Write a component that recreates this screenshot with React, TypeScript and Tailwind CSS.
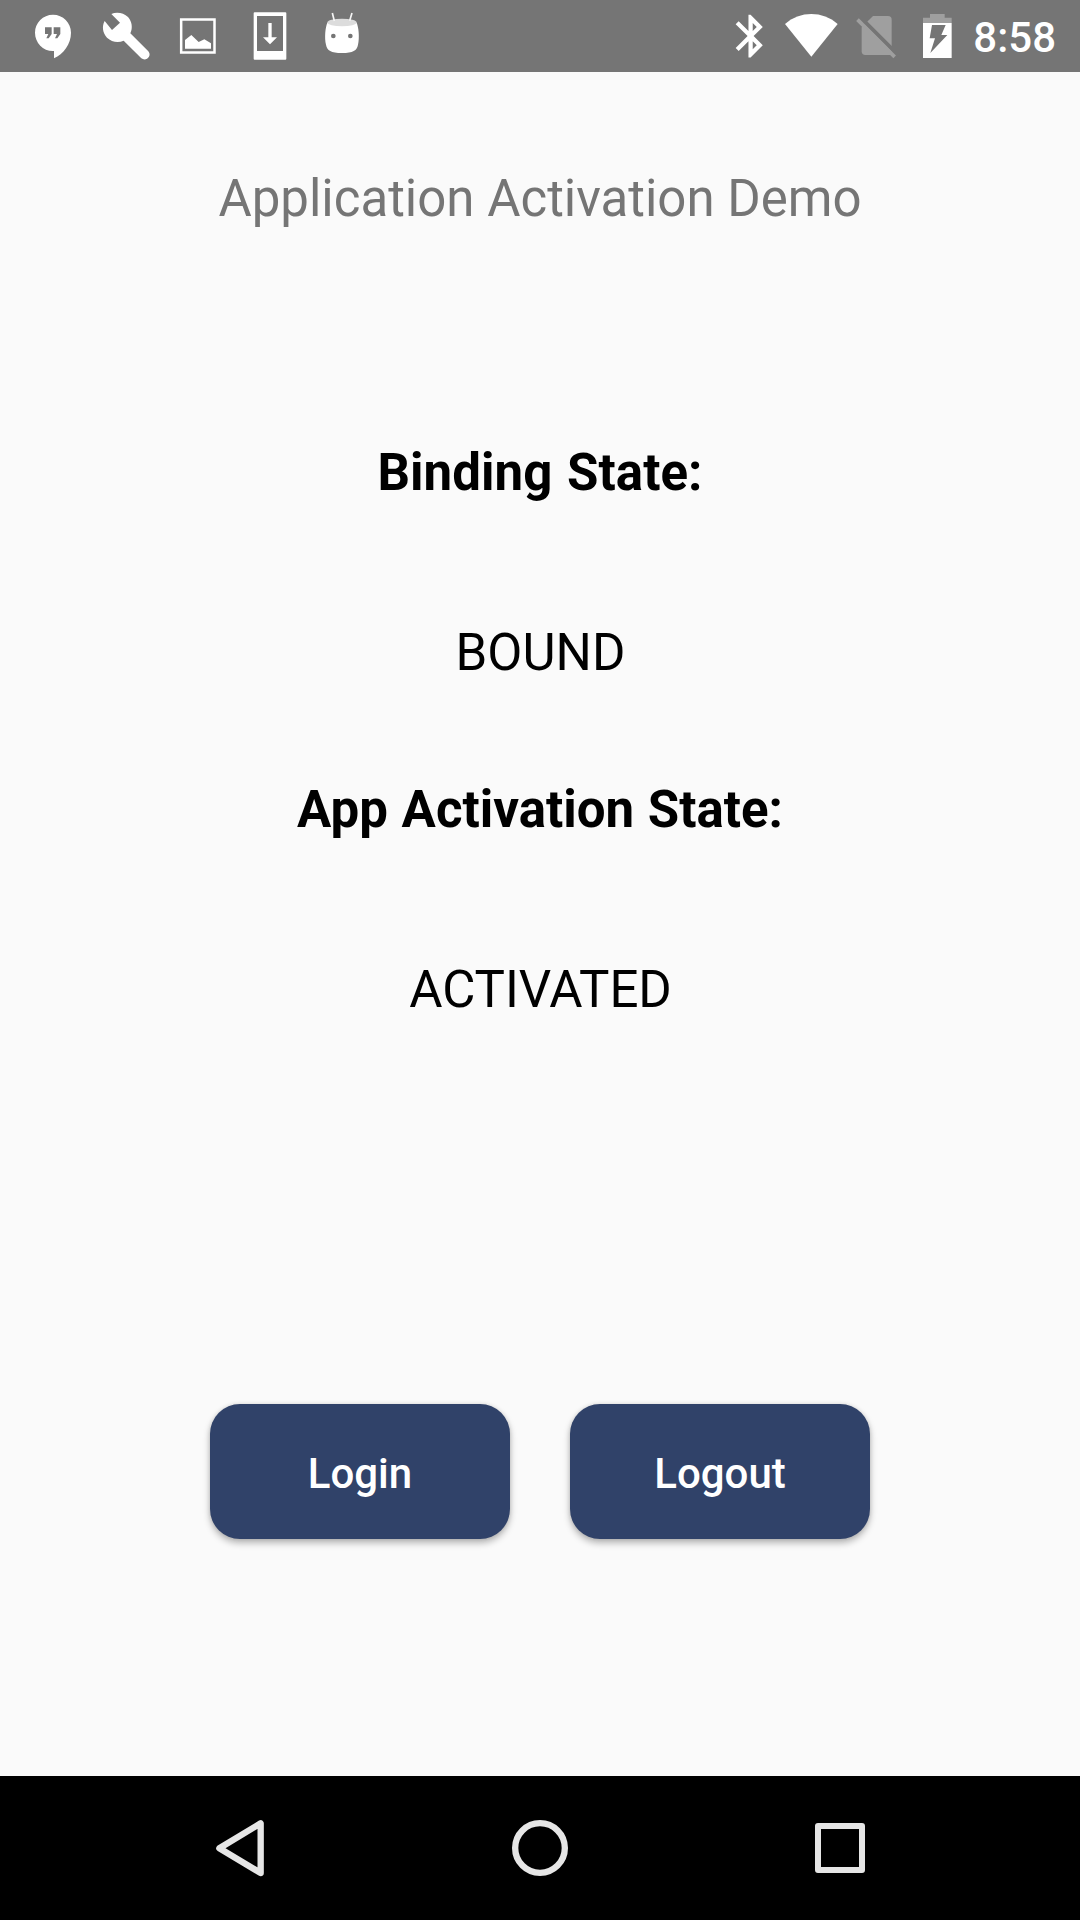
import type { ReactNode } from "react";

function StatusIcon({ viewBox, className, children }: { viewBox: string; className: string; children: ReactNode }) {
  return (
    <svg viewBox={viewBox} className={className} fill="#fff" aria-hidden="true">
      {children}
    </svg>
  );
}

function Notifications() {
  return (
    <div className="flex pl-[17px]">
      <StatusIcon viewBox="51 0 216 216" className="size-[72px]">
        <path d="M159 44C189 44 213 68 213 98C213 132 190 162 162 175V153H159C129 153 105 128 105 98S129 44 159 44Z" />
        <path fill="#757575" d="M135 82H155V102L146 115H139L145 102H135ZM161 82H181V102L172 115H165L171 102H161Z" />
      </StatusIcon>
      <StatusIcon viewBox="267 0 216 216" className="size-[72px]">
        <path d="M334 42C349 35 371 38 384 51C396 64 399 84 391 100L445 154C457 168 438 186 424 175L371 122C354 129 335 126 321 113C308 99 305 79 314 63L336 90L360 68Z" />
      </StatusIcon>
      <StatusIcon viewBox="-57 0 216 216" className="size-[72px]">
        <rect x="3.5" y="58.5" width="100" height="99" fill="none" stroke="#fff" strokeWidth="7.5" />
        <path d="M15 146V120L34 105L56 126L73 118L93 130V146Z" />
      </StatusIcon>
      <StatusIcon viewBox="159 0 216 216" className="size-[72px]">
        <path fillRule="evenodd" d="M224 37H316Q319 37 319 40V176Q319 179 316 179H224Q221 179 221 176V40Q221 37 224 37ZM231 48V153H309V48Z" />
        <path d="M265 69H275V112H291L270 133L249 112H265Z" />
      </StatusIcon>
      <StatusIcon viewBox="375 0 216 216" className="size-[72px]">
        <path d="M442 68H530C536 82 539 112 534 134C531 151 519 159 486 159S441 151 438 134C433 112 436 82 442 68Z" />
        <ellipse cx="486" cy="67.5" rx="44" ry="11.5" fill="#dcdcdc" />
        <path d="M457 39L463 63M516 39L509 62" stroke="#f5f5f5" strokeWidth="5" />
        <circle cx="460" cy="108" r="7" fill="#757575" />
        <circle cx="511" cy="108" r="7" fill="#757575" />
      </StatusIcon>
    </div>
  );
}

function SystemStatus() {
  return (
    <div className="flex w-[355px] items-center pr-[24px]">
      <StatusIcon viewBox="15 0 144 216" className="h-[72px] w-[48px]">
        <path
          transform="translate(15 31.5) scale(6.4)"
          d="M17.71 7.71L12 2h-1v7.59L6.41 5 5 6.41 10.59 12 5 17.59 6.41 19 11 14.41V22h1l5.71-5.71-4.3-4.29 4.3-4.29zM13 5.83l1.88 1.88L13 9.59V5.83zm1.88 10.46L13 18.17v-3.76l1.88 1.88z"
        />
      </StatusIcon>
      <StatusIcon viewBox="159 0 231 216" className="h-[72px] w-[77px]">
        <path d="M195 72C240 32 308 32 353 72L274 170Z" />
      </StatusIcon>
      <StatusIcon viewBox="390 0 159 216" className="h-[72px] w-[53px]">
        <path fill="#9f9f9f" d="M425 82L459 48H504Q515 48 515 59V165H436Q425 165 425 154Z" />
        <path stroke="#757575" strokeWidth="12" d="M413 44L536 167" />
        <path stroke="#9f9f9f" strokeWidth="11" d="M412.5 59L524 170.5" />
      </StatusIcon>
      <StatusIcon viewBox="69 0 162 216" className="h-[72px] w-[54px]">
        <path fill="#9f9f9f" d="M150 42H194V53H215V69H129V53H150Z" />
        <path d="M129 69H215V174H129Z" />
        <path fill="#757575" d="M156 75H197L184 105H202L151 159L165 115H149Z" />
      </StatusIcon>
      <span className="ml-auto pt-[2px] text-[42px] font-medium text-white">8:58</span>
    </div>
  );
}

function ActionButton({ children }: { children: ReactNode }) {
  return (
    <button className="h-[135px] w-[300px] rounded-[30px] bg-[#304269] pt-[5px] shadow-[0_4px_7px_rgba(0,0,0,0.28),0_0_4px_rgba(0,0,0,0.1)]">
      {children}
    </button>
  );
}

function NavIcon({ children }: { children: ReactNode }) {
  return (
    <svg viewBox="0 0 432 432" className="size-[144px]" fill="none" stroke="#e6e6e6" strokeWidth="19" strokeLinejoin="round" aria-hidden="true">
      {children}
    </svg>
  );
}

export default function App() {
  return (
    <div className="flex h-[1920px] w-[1080px] flex-col bg-[#fafafa] font-[Roboto,sans-serif] text-black">
      <header className="flex h-[72px] items-center justify-between bg-[#757575]">
        <Notifications />
        <SystemStatus />
      </header>
      <main className="flex h-[1704px] flex-col items-center text-[51px] leading-[60px]">
        <h1 className="mt-[97px] text-[#757575]">Application Activation Demo</h1>
        <h2 className="mt-[214px] font-bold tracking-[0.05px] [word-spacing:2px]">Binding State:</h2>
        <p className="mt-[120px] pl-[1px]">BOUND</p>
        <h2 className="mt-[97px] font-bold [word-spacing:1px]">App Activation State:</h2>
        <p className="mt-[120px] pl-[1px] tracking-[-0.1px]">ACTIVATED</p>
        <div className="mt-[384px] flex gap-[60px] text-[42px] font-medium text-white">
          <ActionButton>Login</ActionButton>
          <ActionButton>Logout</ActionButton>
        </div>
      </main>
      <nav className="flex h-[144px] justify-center gap-[156px] bg-black">
        <NavIcon>
          <path d="M154 217L278 142V291Z" />
        </NavIcon>
        <NavIcon>
          <circle cx="216" cy="216" r="74.5" />
        </NavIcon>
        <NavIcon>
          <rect x="150" y="150" width="132" height="132" strokeWidth="18" />
        </NavIcon>
      </nav>
    </div>
  );
}
